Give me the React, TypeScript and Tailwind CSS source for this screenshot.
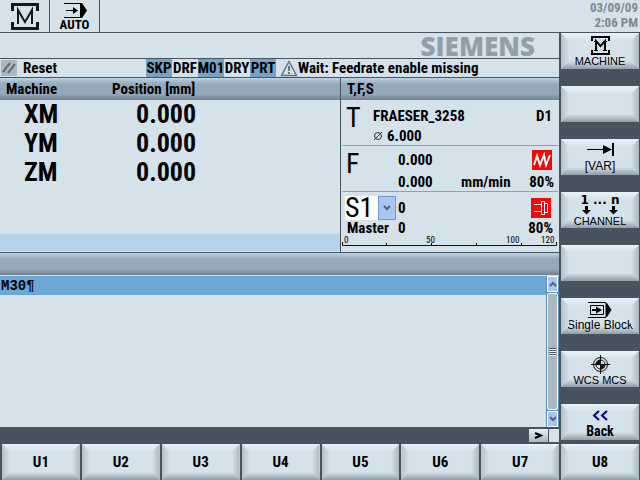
import React, { useState } from 'react';

const HeaderBar = ({ children, className = '' }: { children?: React.ReactNode; className?: string }) => (
  <div className={`bg-[linear-gradient(to_bottom,#bcd5e8_0,#95a9ba_6px,#95a9ba_16px,#6f7f8d_100%)] ${className}`}>{children}</div>
);

// Grey key with bevelled edges, used for both soft key bars
const SoftKey = ({ children, className = '', label }: { children?: React.ReactNode; className?: string; label?: string }) => (
  <button
    aria-label={label}
    className={`relative flex h-9 min-w-0 flex-col items-center bg-[linear-gradient(to_bottom,#e6f3fe_0,#d5e2ea_8px,#d5e2ea_28px,#8f9da8_100%)] ${className}`}
  >
    <span className="absolute inset-y-0 left-0 w-2 bg-linear-to-r from-[#b3c1cb] to-[#d5e2ea] [clip-path:polygon(0_0,100%_8px,100%_28px,0_100%)]" />
    <span className="absolute inset-y-0 right-0 w-2 bg-linear-to-l from-[#a9b7c1] to-[#d5e2ea] [clip-path:polygon(100%_0,0_8px,0_28px,100%_100%)]" />
    {children}
  </button>
);

const MachineIcon = () => (
  <svg width="19" height="19" viewBox="0 0 19 19" fill="none" stroke="#000" className="mt-[3px] shrink-0" shapeRendering="crispEdges">
    <path d="M1 5V1H18V5M1 14V18H18V14" strokeWidth="2" />
    <path d="M3 14H7M12 14H16M3 5H6M13 5H16" strokeWidth="1" />
    <path d="M5 14V5L9.500 10L14 5V14" strokeWidth="2" shapeRendering="auto" />
  </svg>
);

const VarIcon = () => (
  <svg width="27" height="13" viewBox="0 0 27 13" className="mt-1 shrink-0">
    <path d="M0 6H17V7H0ZM16 2L25 6.500L16 11ZM25 0H27V13H25Z" />
  </svg>
);

const DownArrow = () => (
  <svg width="9" height="9" viewBox="0 0 9 9">
    <path d="M3 0H6V4H9L4.500 8.500L0 4H3Z" />
  </svg>
);

const SingleBlockIcon = () => (
  <svg width="24" height="16" viewBox="0 0 24 16" fill="none" stroke="#000" className="mt-1 shrink-0">
    <path d="M0 .5H18M0 15.500H18M2.500 3.500H15.500V12.500H2.500Z" />
    <path d="M4 8H9" strokeWidth="2" />
    <path d="M8 4.500L14 8L8 11.500ZM17.500 1H19L23.500 8L19 15H17.500Z" fill="#000" stroke="none" />
  </svg>
);

const TargetIcon = () => (
  <svg width="19" height="19" viewBox="0 0 19 19" fill="none" stroke="#111" className="mt-1 shrink-0">
    <circle cx="9.500" cy="9.500" r="7" />
    <circle cx="9.500" cy="9.500" r="4.500" />
    <path d="M9.500 0V19M0 9.500H19" />
    <path d="M9.500 9.500V14A4.500 4.500 0 0 0 14 9.500ZM9.500 9.500V5A4.500 4.500 0 0 0 5 9.500Z" fill="#111" />
  </svg>
);

const Chevron = ({ up = false }: { up?: boolean }) => (
  <svg width="8" height="6" viewBox="0 0 8 6" fill="none" stroke="#4b6488" strokeWidth="2">
    <path d={up ? 'M1 5L4 2L7 5' : 'M1 1L4 4L7 1'} />
  </svg>
);

const axes = ['XM', 'YM', 'ZM'];

const modes = [
  { name: 'SKP', on: true },
  { name: 'DRF', on: false },
  { name: 'M01', on: true },
  { name: 'DRY', on: false },
  { name: 'PRT', on: true },
];

const userKeys = ['U1', 'U2', 'U3', 'U4', 'U5', 'U6', 'U7', 'U8'];

const TopBar = () => (
  <header className="flex h-[33px] border-b border-[#47545f]">
    <div className="flex w-[50px] items-center justify-center border-r border-[#47545f]">
      <svg width="28" height="27" viewBox="0 0 28 27" fill="none" stroke="#15181b">
        <path d="M1.500 8V1.500H26.500V8M1.500 19V25.500H26.500V19" strokeWidth="3" />
        <path d="M7 21V7L14 19L21 7V21" strokeWidth="2" />
      </svg>
    </div>
    <div className="flex w-[50px] flex-col items-center border-r border-[#47545f]">
      <svg width="24" height="15" viewBox="0 0 24 15" className="mt-[3px]">
        <path d="M1 0H18V1H1ZM1 14H18V15H1ZM3 7H12V8H3ZM10 4L15 7.500L10 11ZM17 0H19L24 7.500L19 15H17Z" />
      </svg>
      <span className="text-[13px] leading-[14px]">AUTO</span>
    </div>
    <div className="ml-auto pr-0.5 text-right text-[13px] leading-[15px] text-[#7d8994]">
      <div>03/09/09</div>
      <div>2:06 PM</div>
    </div>
  </header>
);

const StatusLine = () => (
  <div className="flex h-[19px] items-center border-b border-[#47545f] whitespace-nowrap">
    <div className="flex w-[146px] items-center">
      <svg width="16" height="16" viewBox="0 0 16 16" className="ml-px">
        <rect width="16" height="16" fill="#acb6bf" />
        <path d="M2 12L9 3M7 13L14 4" stroke="#5d666d" strokeWidth="2" />
      </svg>
      <span className="pl-1.5">Reset</span>
    </div>
    {modes.map((m) => (
      <span key={m.name} className={`flex h-full w-[26px] items-center justify-center ${m.on ? 'bg-[#76a3c5]' : ''}`}>
        {m.name}
      </span>
    ))}
    <svg width="18" height="17" viewBox="0 0 18 17" fill="none" stroke="#69747c" className="ml-1 shrink-0">
      <path d="M9 1.500L16.500 15.500H1.500Z" strokeWidth="1.500" />
      <path d="M9 6V11M9 12V14" strokeWidth="2" />
    </svg>
    <span>Wait: Feedrate enable missing</span>
  </div>
);

const PositionPanel = () => (
  <section className="flex flex-1 flex-col">
    <table className="w-full table-fixed text-left">
      <thead>
        <tr className="h-[22px] bg-[linear-gradient(to_bottom,#bcd5e8_0,#95a9ba_6px,#95a9ba_16px,#6f7f8d_100%)]">
          <th className="w-28 p-0 pl-1.5 font-bold">Machine</th>
          <th className="p-0 font-bold">Position [mm]</th>
        </tr>
      </thead>
      <tbody className="text-[26px] leading-[29px]">
        {axes.map((axis) => (
          <tr key={axis}>
            <td className="p-0 pl-6">{axis}</td>
            <td className="p-0 pl-6">0.000</td>
          </tr>
        ))}
      </tbody>
    </table>
    <div className="mt-auto h-[18px] border-b border-[#d5e2ea] bg-[#b7d3e7]" />
  </section>
);

const TfsPanel = () => {
  const [spindle, setSpindle] = useState('S1');

  return (
    <section className="flex w-[219px] flex-col border-l border-[#47545f] leading-4">
      <HeaderBar className="flex h-[22px] items-center pl-1.5">T,F,S</HeaderBar>
      <div className="mx-px flex h-[46px] border-b border-[#7ba5cd] pt-1">
        <div className="w-[31px] pl-1 text-[28px] leading-7 font-normal">T</div>
        <div className="flex-1 pt-1">
          <div className="flex justify-between pr-1.5">
            <span>FRAESER_3258</span>
            <span>D1</span>
          </div>
          <div className="flex items-center gap-1 pt-1">
            <svg width="10" height="10" viewBox="0 0 10 10" fill="none" stroke="#333">
              <circle cx="5" cy="5" r="3.500" />
              <path d="M1 9L9 1" />
            </svg>
            <span>6.000</span>
          </div>
        </div>
      </div>
      <div className="mx-px flex h-[46px] border-b border-[#7ba5cd] pt-1">
        <div className="w-14 pl-1 text-[28px] leading-7 font-normal">F</div>
        <div className="flex-1">
          <div className="flex h-5 items-center justify-between pr-1.5">
            <span>0.000</span>
            <svg width="20" height="20" viewBox="0 0 20 20">
              <rect width="20" height="20" fill="#fa0505" />
              <path d="M2 15L5 6L8 15L12 5L14 15L18 5" fill="none" stroke="#fff" strokeWidth="2" />
            </svg>
          </div>
          <div className="flex items-center pt-1 pr-1">
            <span className="w-[63px]">0.000</span>
            <span>mm/min</span>
            <span className="ml-auto">80%</span>
          </div>
        </div>
      </div>
      <div className="flex h-11 pt-1 pl-1">
        <div className="w-[53px]">
          <div className="relative h-6">
            <select
              aria-label="Spindle"
              value={spindle}
              onChange={(e) => setSpindle(e.target.value)}
              className="h-6 w-[51px] appearance-none bg-white p-0 text-[28px] leading-6 font-normal"
            >
              <option>S1</option>
            </select>
            <span className="pointer-events-none absolute top-0 left-[33px] flex h-6 w-[18px] items-center justify-center border border-[#6e9bd0] bg-[#a9c5f0]">
              <Chevron />
            </span>
          </div>
          <div className="pl-0.5">Master</div>
        </div>
        <div className="flex-1">
          <div className="flex h-6 items-center justify-between pr-2">
            <span>0</span>
            <svg width="20" height="20" viewBox="0 0 20 20">
              <rect width="20" height="20" fill="#fa0505" />
              <path d="M3 6.500H10M3 13.500H10M10.500 3.500H13.500V16.500H10.500ZM13.500 5.500H16.500V14.500H13.500Z" fill="none" stroke="#fff" />
            </svg>
          </div>
          <div className="flex justify-between pr-1.5">
            <span>0</span>
            <span>80%</span>
          </div>
        </div>
      </div>
      <svg width="100%" height="12" viewBox="0 0 218 12" className="text-[9px] font-normal">
        <path d="M1.500 6V9.500H215.500V6M45.500 7V9M90.500 7V9M135.500 7V9M180.500 7V9" fill="none" stroke="#111" />
        <text x="3" y="7">0</text>
        <text x="85" y="7">50</text>
        <text x="165" y="7">100</text>
        <text x="200" y="7">120</text>
      </svg>
    </section>
  );
};

const ProgramPanel = () => (
  <section className="flex flex-1 flex-col border-t border-[#47545f]">
    <HeaderBar className="h-[23px] border-b border-[#d5e2ea]" />
    <div className="flex flex-1">
      <div className="flex-1">
        <div className="h-[19px] bg-[#6ca8d5] pl-px font-['Liberation_Mono',monospace] text-[14px] leading-5">M30¶</div>
      </div>
      <div className="flex w-[13px] flex-col bg-[#5b91c5] px-px">
        <button aria-label="Scroll up" className="flex h-4 items-center justify-center border border-white bg-[#a9c5f0]">
          <Chevron up />
        </button>
        <div className="my-px flex flex-1 flex-col items-center justify-center gap-px rounded-xs border border-white bg-[#aab8c3]">
          {[0, 1, 2, 3].map((i) => (
            <span key={i} className="h-px w-[7px] bg-[#47545f] shadow-[0_1px_0_#fff]" />
          ))}
        </div>
        <button aria-label="Scroll down" className="flex h-4 items-center justify-center border border-white bg-[#a9c5f0]">
          <Chevron />
        </button>
      </div>
    </div>
  </section>
);

const SideKeys = () => (
  <nav className="flex w-[81px] flex-col justify-between bg-[#47545f] pr-px pb-1 pl-0.5 font-['Liberation_Sans',sans-serif] text-[12px] leading-3 font-normal">
    <SoftKey>
      <MachineIcon />
      <span className="text-[11px]">MACHINE</span>
    </SoftKey>
    <SoftKey label="Empty" />
    <SoftKey>
      <VarIcon />
      <span className="pt-1">[VAR]</span>
    </SoftKey>
    <SoftKey>
      <span className="pt-0.5 font-['DejaVu_Sans',sans-serif] leading-3 font-bold">1 ... n</span>
      <span className="flex gap-[18px]">
        <DownArrow />
        <DownArrow />
      </span>
      <span className="text-[11px]">CHANNEL</span>
    </SoftKey>
    <SoftKey label="Empty" />
    <SoftKey>
      <SingleBlockIcon />
      <span className="pt-px">Single Block</span>
    </SoftKey>
    <SoftKey>
      <TargetIcon />
      <span className="text-[11px]">WCS MCS</span>
    </SoftKey>
    <SoftKey>
      <svg width="16" height="11" viewBox="0 0 16 11" fill="none" stroke="#00008b" strokeWidth="2" className="mt-1.5 shrink-0">
        <path d="M7 1L2 5.500L7 10M15 1L10 5.500L15 10" />
      </svg>
      <span className="pt-1 font-['Liberation_Sans_Narrow','Roboto_Condensed','DejaVu_Sans_Condensed',sans-serif] text-[14px] font-bold">Back</span>
    </SoftKey>
  </nav>
);

export default function App() {
  return (
    <div className="flex min-h-screen flex-col bg-[#d5e2ea] font-['Liberation_Sans_Narrow','Roboto_Condensed','DejaVu_Sans_Condensed',sans-serif] text-[15px] leading-4 font-bold text-black">
      <TopBar />
      <div className="flex flex-1">
        <main className="flex flex-1 flex-col">
          <div className="flex h-[26px] items-center justify-end border-b border-[#47545f] pr-6 font-['Open_Sans',sans-serif] text-[26px] leading-6 font-extrabold text-[#929fa9]">
            SIEMENS
          </div>
          <StatusLine />
          <div className="flex h-[174px]">
            <PositionPanel />
            <TfsPanel />
          </div>
          <ProgramPanel />
          <div className="flex h-[17px] items-center justify-end gap-px bg-[#47545f]">
            <button aria-label="More" className="flex h-[13px] w-[19px] items-center justify-center bg-linear-to-b from-[#e6f3fe] to-[#a9b7c1]">
              <svg width="9" height="7" viewBox="0 0 9 7" fill="none" stroke="#000" strokeWidth="2">
                <path d="M1 1L7 3.500L1 6" />
              </svg>
            </button>
            <span className="h-[13px] w-2.5 bg-[#d5e2ea]" />
          </div>
        </main>
        <SideKeys />
      </div>
      <footer className="grid grid-cols-8 gap-0.5 bg-[#47545f] pr-px pl-0.5">
        {userKeys.map((k) => (
          <SoftKey key={k} className="justify-center">
            {k}
          </SoftKey>
        ))}
      </footer>
    </div>
  );
}
